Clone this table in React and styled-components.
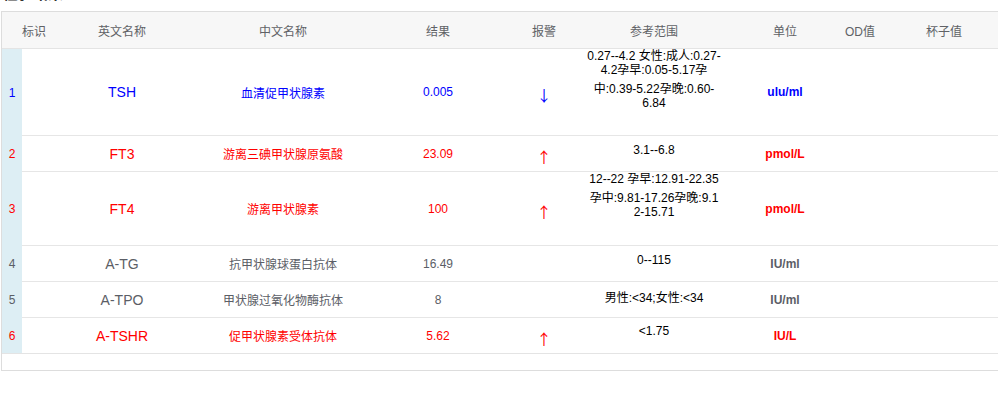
import styled, { createGlobalStyle } from 'styled-components';

const GlobalStyle = createGlobalStyle`
  body {
    margin: 0;
    background: #ffffff;
    overflow: hidden;
    font-family: 'Liberation Sans', 'Noto Sans CJK SC', sans-serif;
  }
`;

const COLS = [
  { key: 'idx', w: 20, pl: 0 },
  { key: 'en', w: 200, pl: 0 },
  { key: 'cn', w: 122, pl: 0 },
  { key: 'res', w: 148, pl: 40 },
  { key: 'alarm', w: 92, pl: 12 },
  { key: 'ref', w: 140, pl: 0 },
  { key: 'unit', w: 96, pl: 26 },
  { key: 'od', w: 80, pl: 0 },
  { key: 'cup', w: 88, pl: 0 },
];

const gridCols = COLS.map((c) => c.w + 'px').join(' ') + ' 1fr';

const COLORS = {
  blue: '#0000ff',
  red: '#ff0000',
  gray: '#5b5e66',
};

// h = row height including the 1px bottom line
const rows = [
  {
    no: 1,
    en: 'TSH',
    cn: '血清促甲状腺素',
    res: '0.005',
    alarm: '↓',
    ref: [['0.27--4.2 女性:成人:0.27-', '4.2孕早:0.05-5.17孕'], ['中:0.39-5.22孕晚:0.60-', '6.84']],
    refTop: 0,
    unit: 'ulu/ml',
    tone: 'blue',
    h: 87,
  },
  {
    no: 2,
    en: 'FT3',
    cn: '游离三碘甲状腺原氨酸',
    res: '23.09',
    alarm: '↑',
    ref: [['3.1--6.8']],
    refTop: 7,
    unit: 'pmol/L',
    tone: 'red',
    h: 36,
  },
  {
    no: 3,
    en: 'FT4',
    cn: '游离甲状腺素',
    res: '100',
    alarm: '↑',
    ref: [['12--22 孕早:12.91-22.35'], ['孕中:9.81-17.26孕晚:9.1', '2-15.71']],
    refTop: 0,
    unit: 'pmol/L',
    tone: 'red',
    h: 74,
  },
  {
    no: 4,
    en: 'A-TG',
    cn: '抗甲状腺球蛋白抗体',
    res: '16.49',
    alarm: '',
    ref: [['0--115']],
    refTop: 7,
    unit: 'IU/ml',
    tone: 'gray',
    h: 36,
  },
  {
    no: 5,
    en: 'A-TPO',
    cn: '甲状腺过氧化物酶抗体',
    res: '8',
    alarm: '',
    ref: [['男性:<34;女性:<34']],
    refTop: 9,
    unit: 'IU/ml',
    tone: 'gray',
    h: 36,
  },
  {
    no: 6,
    en: 'A-TSHR',
    cn: '促甲状腺素受体抗体',
    res: '5.62',
    alarm: '↑',
    ref: [['<1.75']],
    refTop: 6,
    unit: 'IU/L',
    tone: 'red',
    h: 35,
  },
];

const Page = styled.div`
  padding-left: 1px;
`;

const Title = styled.div`
  height: 24px;
  margin-top: -18px;
  line-height: 24px;
  font-size: 15px;
  font-weight: bold;
  color: #333333;
  padding-left: 2px;
`;

const TableBox = styled.div`
  margin-top: 5px;
  width: 1010px;
  border: 1px solid #dddddd;
  border-right: none;
`;

const HeadRow = styled.div`
  display: grid;
  grid-template-columns: ${gridCols};
  height: 36px;
  background: #f7f7f7;
  border-bottom: 1px solid #e4e4e4;
`;

const HeadCell = styled.div`
  display: flex;
  align-items: center;
  justify-content: ${(p) => (p.$left ? 'flex-start' : 'center')};
  padding-left: ${(p) => p.$pl}px;
  font-size: 12px;
  color: #606266;
  white-space: nowrap;
`;

const Body = styled.div`
  border-bottom: 1px solid #e4e4e4;
`;

const Row = styled.div`
  display: grid;
  grid-template-columns: ${gridCols};
  min-height: ${(p) => p.$h}px;

  & > div:not(:first-child) {
    border-bottom: 1px solid #e6e6e6;
  }
  &:last-child > div:not(:first-child) {
    border-bottom: none;
  }
`;

const IndexCell = styled.div`
  display: flex;
  align-items: center;
  justify-content: center;
  background: #ddeef4;
  font-size: 12px;
  color: ${(p) => p.$color};
`;

const Cell = styled.div`
  display: flex;
  align-items: center;
  justify-content: center;
  padding-left: ${(p) => p.$pl}px;
  font-size: ${(p) => p.$size || 12}px;
  font-weight: ${(p) => (p.$bold ? 'bold' : 'normal')};
  color: ${(p) => p.$color};
  white-space: nowrap;
`;

const Arrow = styled.span`
  font-family: 'Noto Sans CJK SC', sans-serif;
  font-size: 15px;
  line-height: 16px;
  margin-top: 6px;
  color: ${(p) => p.$color};
`;

const RefCell = styled.div`
  display: flex;
  flex-direction: column;
  align-items: center;
  padding-top: ${(p) => p.$top}px;
  font-size: 12px;
  color: #000000;
`;

const RefBlock = styled.div`
  display: flex;
  flex-direction: column;
  align-items: center;
  line-height: 14px;
  white-space: nowrap;

  & + & {
    margin-top: 5px;
  }
`;

const Filler = styled.div`
  height: 16px;
`;

const headers = ['标识', '英文名称', '中文名称', '结果', '报警', '参考范围', '单位', 'OD值', '杯子值'];

export default function App() {
  return (
    <Page>
      <GlobalStyle />
      <Title>检验结果</Title>
      <TableBox>
        <HeadRow>
          {headers.map((h, i) => (
            <HeadCell key={h} $left={i === 0} $pl={i === 0 ? 20 : COLS[i].pl}>
              {h}
            </HeadCell>
          ))}
          <HeadCell $pl={0} />
        </HeadRow>
        <Body>
          {rows.map((r) => {
            const color = COLORS[r.tone];
            return (
              <Row key={r.no} $h={r.h}>
                <IndexCell $color={color}>{r.no}</IndexCell>
                <Cell $pl={0} $size={14} $color={color}>
                  {r.en}
                </Cell>
                <Cell $pl={0} $color={color}>
                  {r.cn}
                </Cell>
                <Cell $pl={40} $color={color}>
                  {r.res}
                </Cell>
                <Cell $pl={12} $color={color}>
                  {r.alarm && <Arrow $color={color}>{r.alarm}</Arrow>}
                </Cell>
                <RefCell $top={r.refTop}>
                  {r.ref.map((block, bi) => (
                    <RefBlock key={bi}>
                      {block.map((line) => (
                        <span key={line}>{line}</span>
                      ))}
                    </RefBlock>
                  ))}
                </RefCell>
                <Cell $pl={26} $bold $color={color}>
                  {r.unit}
                </Cell>
                <Cell $pl={0} />
                <Cell $pl={0} />
                <Cell $pl={0} />
              </Row>
            );
          })}
        </Body>
        <Filler />
      </TableBox>
    </Page>
  );
}
